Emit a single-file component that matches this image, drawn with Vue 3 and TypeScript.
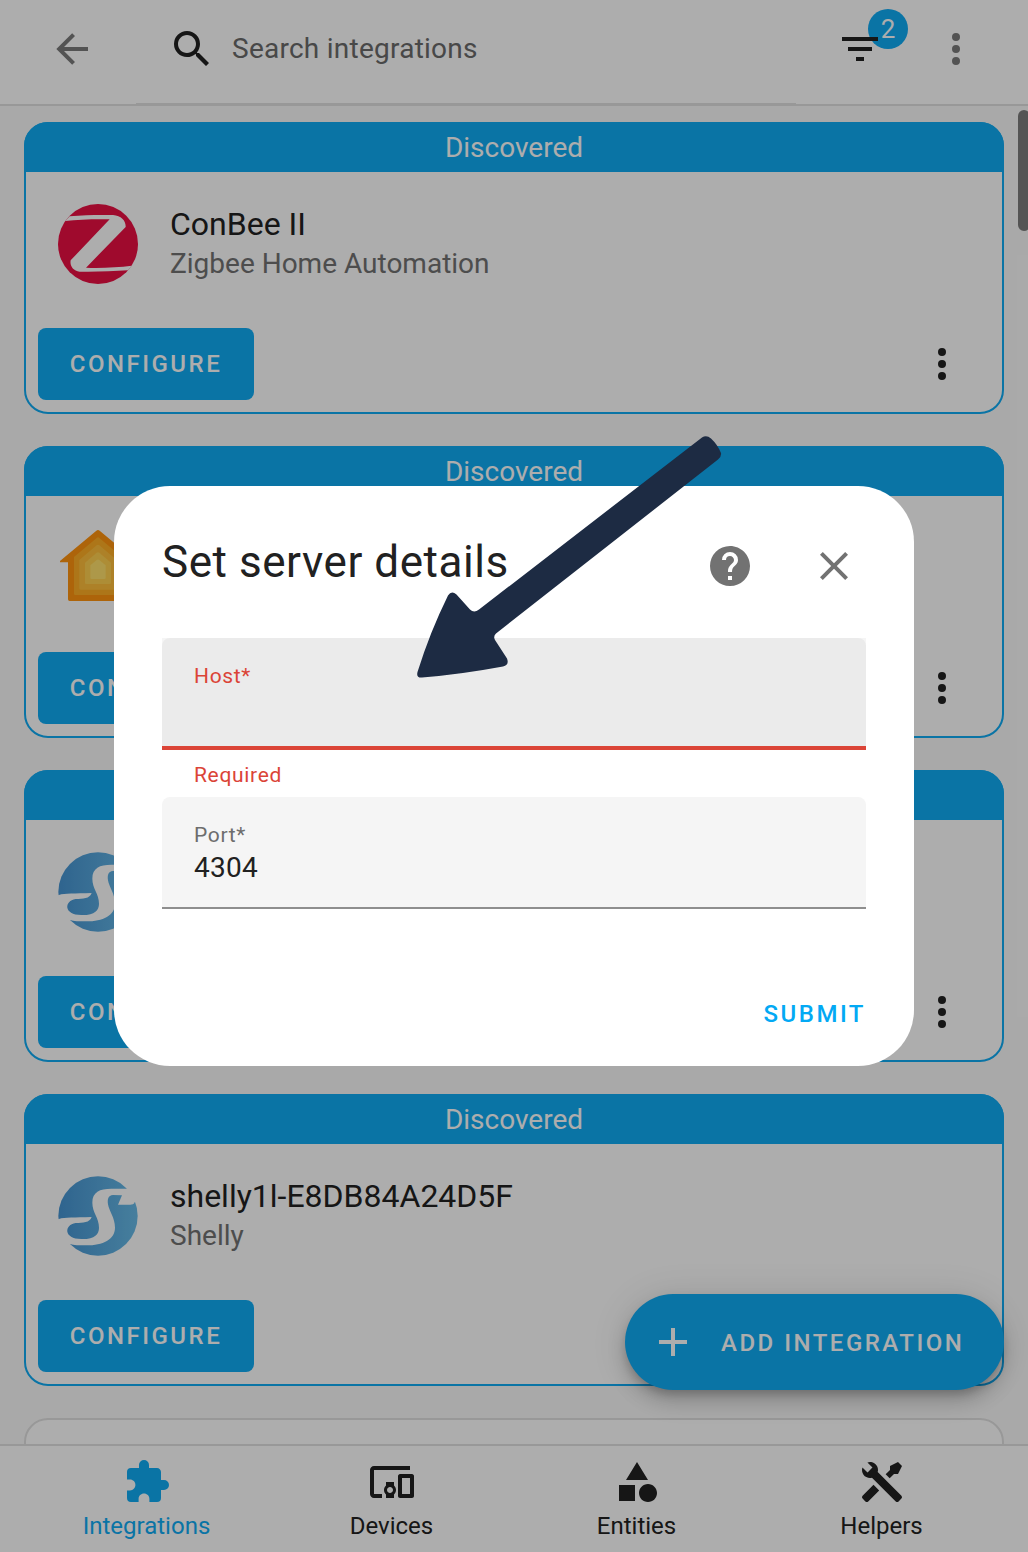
<script setup lang="ts">
import { ref } from 'vue'

interface Discovered {
  name: string
  domain: string
  logo: 'zigbee' | 'house' | 'shelly'
}

interface NavItem {
  label: string
  icon: string
}

const icons = {
  back: 'M20,11V13H8L13.5,18.5L12.08,19.92L4.16,12L12.08,4.08L13.5,5.5L8,11H20Z',
  search:
    'M9.5,3A6.5,6.5 0 0,1 16,9.5C16,11.11 15.41,12.59 14.44,13.73L14.71,14H15.5L20.5,19L19,20.5L14,15.5V14.71L13.73,14.44C12.59,15.41 11.11,16 9.5,16A6.5,6.5 0 0,1 3,9.5A6.5,6.5 0 0,1 9.5,3M9.5,5C7,5 5,7 5,9.5C5,12 7,14 9.5,14C12,14 14,12 14,9.5C14,7 12,5 9.5,5Z',
  filter: 'M6,13H18V11H6M3,6V8H21V6M10,18H14V16H10V18Z',
  dots: 'M12,16A2,2 0 0,1 14,18A2,2 0 0,1 12,20A2,2 0 0,1 10,18A2,2 0 0,1 12,16M12,10A2,2 0 0,1 14,12A2,2 0 0,1 12,14A2,2 0 0,1 10,12A2,2 0 0,1 12,10M12,4A2,2 0 0,1 14,6A2,2 0 0,1 12,8A2,2 0 0,1 10,6A2,2 0 0,1 12,4Z',
  help: 'M15.07,11.25L14.17,12.17C13.45,12.89 13,13.5 13,15H11V14.5C11,13.39 11.45,12.39 12.17,11.67L13.41,10.41C13.78,10.05 14,9.55 14,9C14,7.89 13.1,7 12,7A2,2 0 0,0 10,9H8A4,4 0 0,1 12,5A4,4 0 0,1 16,9C16,9.88 15.64,10.67 15.07,11.25M13,19H11V17H13M12,2A10,10 0 0,0 2,12A10,10 0 0,0 12,22A10,10 0 0,0 22,12C22,6.47 17.5,2 12,2Z',
  close:
    'M19,6.41L17.59,5L12,10.59L6.41,5L5,6.41L10.59,12L5,17.59L6.41,19L12,13.41L17.59,19L19,17.59L13.41,12L19,6.41Z',
  plus: 'M19,13H13V19H11V13H5V11H11V5H13V11H19V13Z',
}

const cards: Discovered[] = [
  { name: 'ConBee II', domain: 'Zigbee Home Automation', logo: 'zigbee' },
  { name: '', domain: '', logo: 'house' },
  { name: '', domain: '', logo: 'shelly' },
  { name: 'shelly1l-E8DB84A24D5F', domain: 'Shelly', logo: 'shelly' },
]

const nav: NavItem[] = [
  {
    label: 'Integrations',
    icon: 'M20.5,11H19V7C19,5.89 18.1,5 17,5H13V3.5A2.5,2.5 0 0,0 10.5,1A2.5,2.5 0 0,0 8,3.5V5H4A2,2 0 0,0 2,7V10.8H3.5C5,10.8 6.2,12 6.2,13.5C6.2,15 5,16.2 3.5,16.2H2V20A2,2 0 0,0 4,22H7.8V20.5C7.8,19 9,17.8 10.5,17.8C12,17.8 13.2,19 13.2,20.5V22H17A2,2 0 0,0 19,20V16H20.5A2.5,2.5 0 0,0 23,13.5A2.5,2.5 0 0,0 20.5,11Z',
  },
  {
    label: 'Devices',
    icon: 'M3 6H21V4H3C1.9 4 1 4.9 1 6V18C1 19.1 1.9 20 3 20H7V18H3V6M13 12H9V13.78C8.39 14.33 8 15.11 8 16C8 16.89 8.39 17.67 9 18.22V20H13V18.22C13.61 17.67 14 16.88 14 16S13.61 14.33 13 13.78V12M11 17.5C10.17 17.5 9.5 16.83 9.5 16S10.17 14.5 11 14.5 12.5 15.17 12.5 16 11.83 17.5 11 17.5M22 8H16C15.5 8 15 8.5 15 9V19C15 19.5 15.5 20 16 20H22C22.5 20 23 19.5 23 19V9C23 8.5 22.5 8 22 8M21 18H17V10H21V18Z',
  },
  {
    label: 'Entities',
    icon: 'M11,13.5V21.5H3V13.5H11M12,2L17.5,11H6.5L12,2M17.5,13C20,13 22,15 22,17.5C22,20 20,22 17.5,22C15,22 13,20 13,17.5C13,15 15,13 17.5,13Z',
  },
  {
    label: 'Helpers',
    icon: 'M21.71 20.29L20.29 21.71A1 1 0 0 1 18.88 21.71L7 9.85A3.81 3.81 0 0 1 6 10A4 4 0 0 1 2.22 4.7L4.76 7.24L5.29 6.71L6.71 5.29L7.24 4.76L4.7 2.22A4 4 0 0 1 10 6A3.81 3.81 0 0 1 9.85 7L21.71 18.88A1 1 0 0 1 21.71 20.29M2.29 18.88A1 1 0 0 0 2.29 20.29L3.71 21.71A1 1 0 0 0 5.12 21.71L10.59 16.25L7.76 13.42M20 2L16 4V6L13.83 8.17L15.83 10.17L18 8H20L22 4Z',
  },
]

const activeTab = ref('Integrations')
const filterCount = ref(2)
const port = ref('4304')
</script>

<template>
  <div class="screen">
    <header class="toolbar">
      <svg class="icon back" viewBox="0 0 24 24"><path :d="icons.back" /></svg>
      <div class="search">
        <svg class="icon" viewBox="0 0 24 24"><path :d="icons.search" /></svg>
        <span class="placeholder">Search integrations</span>
      </div>
      <div class="filter">
        <span class="badge">{{ filterCount }}</span>
        <svg class="icon" viewBox="0 0 24 24"><path :d="icons.filter" /></svg>
      </div>
      <svg class="icon menu" viewBox="0 0 24 24"><path :d="icons.dots" /></svg>
    </header>

    <main class="content">
      <section v-for="(card, i) in cards" :key="i" class="card">
        <div class="card-banner"><span v-if="i !== 2">Discovered</span></div>
        <div class="card-body">
          <svg v-if="card.logo === 'zigbee'" class="logo" viewBox="0 0 240 240">
            <circle cx="120" cy="120" r="120" fill="#eb0f43" />
            <path
              fill="#fff"
              d="M35 37C80 33 120 32 165 33C190 35 204 50 203 69L84 191C130 193 180 190 221 185L210 199C165 202 110 204 65 203C45 200 35 185 38 169L155 46C105 45 60 47 22 51Z"
            />
          </svg>
          <svg v-else-if="card.logo === 'house'" class="logo" viewBox="0 0 240 240">
            <g transform="translate(0 -7)">
              <path fill="#ff9410" d="M115 15Q120 11 125 15L234 106V110H210V221Q210 226 205 226H35Q30 226 30 221V110H6V106Z" />
              <path fill="#ffaf25" d="M116 37Q120 33 124 37L192 94V204Q192 208 188 208H52Q48 208 48 204V94Z" />
              <path fill="#ffbf3c" d="M116 59Q120 55 124 59L176 103V188Q176 192 172 192H68Q64 192 64 188V103Z" />
              <path fill="#ffd050" d="M116 81Q120 78 124 81L159 111V172Q159 175 155 175H85Q81 175 81 172V111Z" />
              <path fill="#ffe06c" d="M116 103Q120 100 124 103L143 119V156Q143 160 139 160H101Q97 160 97 156V119Z" />
            </g>
          </svg>
          <svg v-else class="logo" viewBox="0 0 240 240">
            <defs>
              <linearGradient :id="'shelly' + i" x1="0" x2="1" y1="0" y2="0">
                <stop offset="0" stop-color="#4694d2" />
                <stop offset="1" stop-color="#68bbe8" />
              </linearGradient>
            </defs>
            <circle cx="120" cy="120" r="119" :fill="`url(#shelly${i})`" />
            <path
              fill="#fff"
              d="M0 130L3 129C20 123 50 125 101 123C95 140 75 141 53 141C18 146 16 189 70 189C110 190 123 175 123 155C123 125 103 110 103 80C103 48 125 38 160 38H240V78H230C228 86 222 86 215 86H180L192 58L165 57C150 58 148 70 150 85C153 105 171 125 171 155C171 190 135 208 85 208C65 208 45 208 38 204L20 220L0 200Z"
            />
          </svg>
          <div class="card-text">
            <div class="card-name">{{ card.name }}</div>
            <div class="card-domain">{{ card.domain }}</div>
          </div>
        </div>
        <div class="card-actions">
          <button class="configure">CONFIGURE</button>
          <svg class="icon" viewBox="0 0 24 24"><path :d="icons.dots" /></svg>
        </div>
      </section>
      <section class="card plain"></section>
    </main>

    <nav class="tabs">
      <a v-for="item in nav" :key="item.label" class="tab" :class="{ active: item.label === activeTab }">
        <svg class="icon" viewBox="0 0 24 24"><path :d="item.icon" /></svg>
        <span>{{ item.label }}</span>
      </a>
    </nav>

    <div class="scrollbar"></div>
    <button class="fab">
      <svg class="icon" viewBox="0 0 24 24"><path :d="icons.plus" /></svg>
      <span>ADD INTEGRATION</span>
    </button>

    <div class="scrim"></div>

    <div class="dialog">
      <div class="dialog-head">
        <h2>Set server details</h2>
        <svg class="icon help" viewBox="0 0 24 24"><path :d="icons.help" /></svg>
        <svg class="icon" viewBox="0 0 24 24"><path :d="icons.close" /></svg>
      </div>
      <div class="field-wrap">
        <div class="field invalid">
          <span class="label">Host*</span>
        </div>
      </div>
      <div class="helper">Required</div>
      <div class="field">
        <span class="label">Port*</span>
        <span class="value">{{ port }}</span>
      </div>
      <div class="dialog-actions">
        <button class="submit">SUBMIT</button>
      </div>
    </div>

    <svg class="pointer" viewBox="417 436 305 243">
      <path
        d="M702 437.500Q706.500 434.500 711 438.500Q717.500 444.500 721 453Q721.500 457 718 459.500L496 633.500Q493 636.500 495 640L507 658.500Q509.500 665 503 666.500Q460 674.500 422 677.500Q416 678 417.500 672Q430 632 448 595.500Q451.500 590 456.500 594.500L470 609.500Q474 613.500 479 609.500Z"
      />
    </svg>
  </div>
</template>

<style>
body {
  margin: 0;
  background: #aaa;
}
</style>

<style scoped>
.screen {
  --blue: #10abf4;
  position: relative;
  width: 1028px;
  height: 1552px;
  overflow: hidden;
  display: flex;
  flex-direction: column;
  background: #fafafa;
  color: #212121;
  font-family: Roboto, sans-serif;
  font-size: 28px;
}
.icon {
  display: block;
  flex: none;
  width: 48px;
  height: 48px;
  fill: currentColor;
}
button {
  border: 0;
  margin: 0;
  font: 500 24px/28px Roboto, sans-serif;
  letter-spacing: 2.5px;
}
.toolbar {
  box-sizing: border-box;
  flex: none;
  display: flex;
  height: 106px;
  padding-left: 48px;
  background: #fff;
  border-bottom: 2px solid #e0e0e0;
}
.toolbar > .icon {
  margin-top: 25px;
}
.back,
.menu {
  color: #7b7b7b;
}
.search {
  box-sizing: border-box;
  display: flex;
  align-items: center;
  gap: 16px;
  width: 660px;
  height: 104px;
  margin-left: 40px;
  padding: 0 0 5px 32px;
  border-bottom: 1px solid #e0e0e0;
}
.placeholder {
  padding-bottom: 2px;
  color: #6a6a6a;
  letter-spacing: 0.25px;
}
.filter {
  position: relative;
  margin: 25px 48px 0 40px;
}
.filter .icon {
  position: relative;
}
.badge {
  position: absolute;
  left: 32px;
  top: -16px;
  width: 40px;
  height: 40px;
  border-radius: 50%;
  background: var(--blue);
  color: #fff;
  font-size: 26px;
  line-height: 40px;
  text-align: center;
}
.content {
  flex: 1;
  min-height: 0;
  overflow: hidden;
  display: flex;
  flex-direction: column;
  gap: 32px;
  padding: 16px 24px 0;
}
.card {
  box-sizing: border-box;
  flex: none;
  height: 292px;
  border: 2px solid var(--blue);
  border-radius: 24px;
  background: #fff;
}
.card.plain {
  border-color: #e0e0e0;
}
.card-banner {
  height: 50px;
  margin: -2px -2px 0;
  border-radius: 24px 24px 0 0;
  background: var(--blue);
  color: #fff;
  line-height: 52px;
  text-align: center;
}
.card-body {
  display: flex;
  gap: 32px;
  padding: 32px 32px 0;
}
.logo {
  flex: none;
  width: 80px;
  height: 80px;
}
.card-name {
  height: 40px;
  font-size: 32px;
  line-height: 40px;
}
.card-domain {
  height: 40px;
  color: #727272;
  line-height: 39px;
}
.card-actions {
  display: flex;
  justify-content: space-between;
  align-items: center;
  padding: 44px 36px 0 12px;
}
.configure {
  height: 72px;
  width: 216px;
  padding: 0 31px;
  border-radius: 8px;
  background: var(--blue);
  color: #fff;
}
.tabs {
  box-sizing: border-box;
  flex: none;
  display: flex;
  height: 108px;
  padding: 12px 24px 0;
  background: #fff;
  border-top: 2px solid #e0e0e0;
}
.tab {
  flex: 1;
  display: flex;
  flex-direction: column;
  align-items: center;
  gap: 6px;
  font-size: 24px;
  line-height: 28px;
}
.tab.active {
  color: var(--blue);
}
.scrollbar {
  position: absolute;
  left: 1018px;
  top: 110px;
  width: 12px;
  height: 121px;
  border-radius: 6px;
  background: #7d7d7d;
}
.fab {
  position: absolute;
  left: 625px;
  top: 1294px;
  width: 379px;
  height: 96px;
  display: flex;
  align-items: center;
  gap: 24px;
  padding: 0 0 0 24px;
  border-radius: 48px;
  background: var(--blue);
  color: #fff;
  white-space: nowrap;
  box-shadow:
    0 6px 10px -2px rgba(0, 0, 0, 0.2),
    0 12px 20px rgba(0, 0, 0, 0.14),
    0 2px 36px rgba(0, 0, 0, 0.12);
}
.fab span {
  padding-top: 2px;
}
.scrim {
  position: absolute;
  inset: 0;
  background: rgba(0, 0, 0, 0.32);
}
.dialog {
  position: absolute;
  box-sizing: border-box;
  left: 114px;
  top: 486px;
  width: 800px;
  height: 580px;
  padding: 56px 48px 0;
  border-radius: 56px;
  background: #fff;
}
.dialog-head {
  display: flex;
  height: 96px;
  color: #727272;
}
.dialog-head .icon {
  margin-right: 8px;
}
.dialog-head .help {
  margin-right: 56px;
}
h2 {
  flex: 1;
  margin: -10px 0 0;
  color: #212121;
  font-size: 44px;
  font-weight: 400;
  line-height: 60px;
  letter-spacing: 0.55px;
}
.field-wrap {
  background: #f5f5f5;
}
.field {
  box-sizing: border-box;
  height: 112px;
  padding: 25px 32px 0;
  display: flex;
  flex-direction: column;
  border-bottom: 2px solid #8e8e8e;
  border-radius: 8px 8px 0 0;
  background: #f5f5f5;
}
.field.invalid {
  border-bottom: 4px solid #db4437;
  background: #ebebeb;
}
.label {
  color: #6d6d6d;
  font-size: 21px;
  line-height: 26px;
  letter-spacing: 0.65px;
}
.invalid .label,
.helper {
  color: #db4437;
}
.value {
  line-height: 40px;
  letter-spacing: 0.25px;
}
.helper {
  height: 47px;
  padding-left: 32px;
  font-size: 21px;
  line-height: 50px;
  letter-spacing: 0.68px;
}
.dialog-actions {
  display: flex;
  justify-content: flex-end;
  padding-top: 91px;
}
.submit {
  padding: 0;
  background: none;
  color: #03a9f4;
}
.pointer {
  position: absolute;
  left: 417px;
  top: 436px;
  width: 305px;
  height: 243px;
  fill: #1d2b43;
}
</style>
